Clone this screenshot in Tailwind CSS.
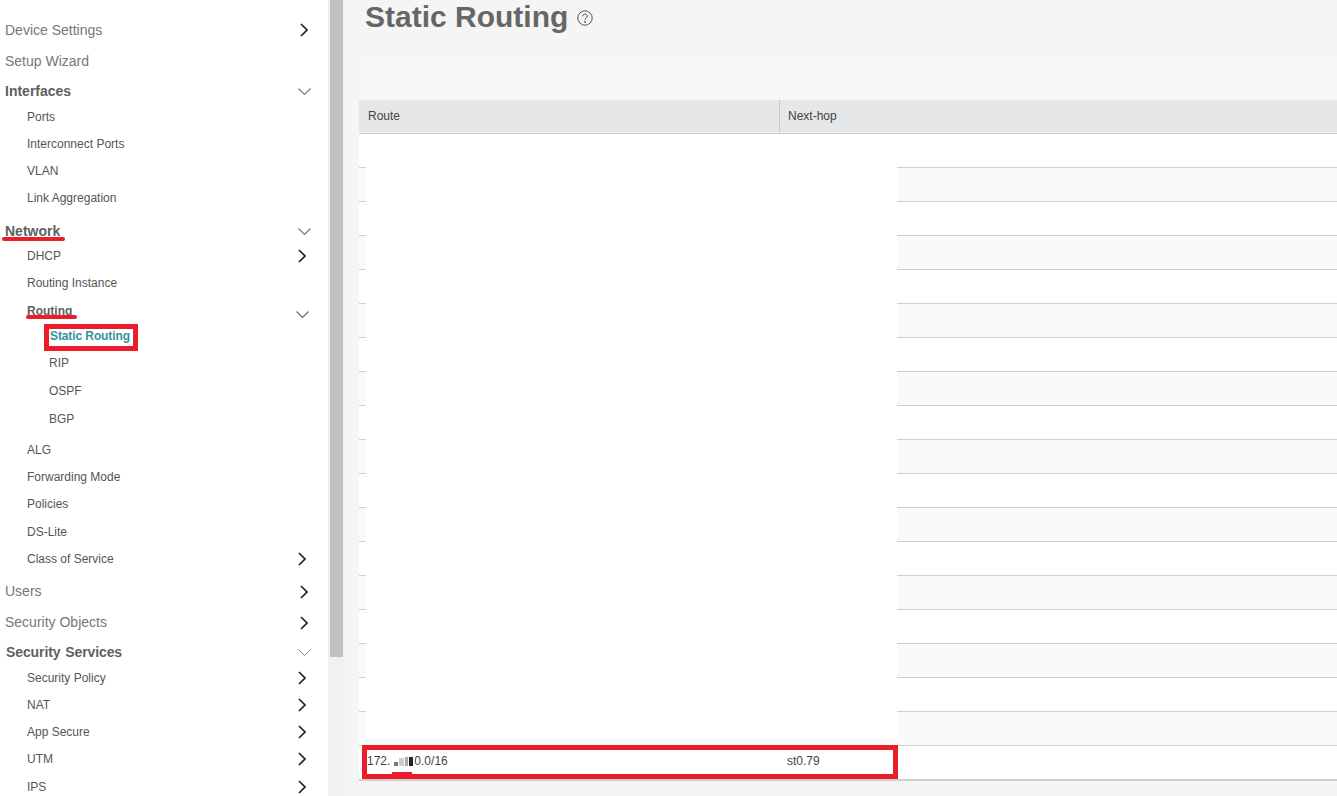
<!DOCTYPE html>
<html lang="en">
<head>
<meta charset="utf-8">
<title>Static Routing</title>
<script src="https://cdn.jsdelivr.net/npm/@tailwindcss/browser@4"></script>
</head>
<body class="overflow-hidden">
<div class="relative flex h-[796px] w-[1337px] overflow-hidden bg-[#f5f5f5] font-['Liberation_Sans',Arial,sans-serif]">

  <!-- Sidebar -->
  <nav class="h-[796px] w-[328px] shrink-0 overflow-hidden bg-white pt-[15px] text-[12px] text-[#555]">
    <div class="flex h-[30px] items-center justify-between pl-[5px] pr-[20px] text-[14px] text-[#777]">Device Settings
      <svg class="h-[14px] w-[8px] text-[#222]" viewBox="0 0 8 14" fill="none" stroke="currentColor" stroke-width="1.7"><path d="M1 1l6 6-6 6"/></svg></div>
    <div class="mt-[1px] flex h-[30px] items-center pl-[5px] text-[14px] text-[#777]">Setup Wizard</div>
    <div class="mt-[3px] flex h-[24px] items-center justify-between pl-[5px] pr-[17px] text-[14px] font-bold text-[#5f5f5f]">Interfaces
      <svg class="h-[7px] w-[13px] text-[#777]" viewBox="0 0 13 7" fill="none" stroke="currentColor" stroke-width="1.1"><path d="M.5.5l6 6 6-6"/></svg></div>
    <div class="flex h-[27px] items-center pl-[27px]">Ports</div>
    <div class="flex h-[27px] items-center pl-[27px]">Interconnect Ports</div>
    <div class="flex h-[27px] items-center pl-[27px]">VLAN</div>
    <div class="flex h-[27px] items-center pl-[27px]">Link Aggregation</div>
    <div class="mt-[8px] flex h-[24px] items-center justify-between pl-[5px] pr-[17px] text-[14px] font-bold text-[#5f5f5f]">Network
      <svg class="h-[7px] w-[13px] text-[#777]" viewBox="0 0 13 7" fill="none" stroke="currentColor" stroke-width="1.1"><path d="M.5.5l6 6 6-6"/></svg></div>
    <div class="flex h-[26px] items-center justify-between pl-[27px] pr-[22px]">DHCP
      <svg class="h-[14px] w-[8px] text-[#222]" viewBox="0 0 8 14" fill="none" stroke="currentColor" stroke-width="1.7"><path d="M1 1l6 6-6 6"/></svg></div>
    <div class="flex h-[27px] items-center pl-[27px]">Routing Instance</div>
    <div class="mt-[4px] flex h-[22px] items-center justify-between pl-[27px] pr-[19px] font-bold text-[#5f5f5f]">Routing
      <svg class="mt-[6px] h-[7px] w-[13px] text-[#666]" viewBox="0 0 13 7" fill="none" stroke="currentColor" stroke-width="1.1"><path d="M.5.5l6 6 6-6"/></svg></div>
    <div class="flex h-[27px] items-center pl-[50px] font-bold tracking-[-0.1px] text-[#2f9499]">Static Routing</div>
    <div class="flex h-[28px] items-center pl-[49px]">RIP</div>
    <div class="flex h-[28px] items-center pl-[49px]">OSPF</div>
    <div class="flex h-[27px] items-center pl-[49px]">BGP</div>
    <div class="mt-[4px] flex h-[27px] items-center pl-[27px]">ALG</div>
    <div class="flex h-[27px] items-center pl-[27px]">Forwarding Mode</div>
    <div class="flex h-[28px] items-center pl-[27px]">Policies</div>
    <div class="flex h-[27px] items-center pl-[27px]">DS-Lite</div>
    <div class="flex h-[27px] items-center justify-between pl-[27px] pr-[22px]">Class of Service
      <svg class="h-[14px] w-[8px] text-[#222]" viewBox="0 0 8 14" fill="none" stroke="currentColor" stroke-width="1.7"><path d="M1 1l6 6-6 6"/></svg></div>
    <div class="mt-[4px] flex h-[31px] items-center justify-between pl-[5px] pr-[20px] text-[14px] text-[#777]">Users
      <svg class="h-[14px] w-[8px] text-[#222]" viewBox="0 0 8 14" fill="none" stroke="currentColor" stroke-width="1.7"><path d="M1 1l6 6-6 6"/></svg></div>
    <div class="flex h-[31px] items-center justify-between pl-[5px] pr-[20px] text-[14px] text-[#777]">Security Objects
      <svg class="h-[14px] w-[8px] text-[#222]" viewBox="0 0 8 14" fill="none" stroke="currentColor" stroke-width="1.7"><path d="M1 1l6 6-6 6"/></svg></div>
    <div class="mt-[2px] flex h-[24px] items-center justify-between pl-[6px] pr-[17px] text-[14px] font-bold tracking-[-0.1px] text-[#5f5f5f] [word-spacing:1px]">Security Services
      <svg class="h-[7px] w-[13px] text-[#888]" viewBox="0 0 13 7" fill="none" stroke="currentColor" stroke-width="1"><path d="M.5.5l6 6 6-6"/></svg></div>
    <div class="flex h-[27px] items-center justify-between pl-[27px] pr-[22px]">Security Policy
      <svg class="h-[14px] w-[8px] text-[#222]" viewBox="0 0 8 14" fill="none" stroke="currentColor" stroke-width="1.7"><path d="M1 1l6 6-6 6"/></svg></div>
    <div class="flex h-[27px] items-center justify-between pl-[27px] pr-[22px]">NAT
      <svg class="h-[14px] w-[8px] text-[#222]" viewBox="0 0 8 14" fill="none" stroke="currentColor" stroke-width="1.7"><path d="M1 1l6 6-6 6"/></svg></div>
    <div class="flex h-[27px] items-center justify-between pl-[27px] pr-[22px]">App Secure
      <svg class="h-[14px] w-[8px] text-[#222]" viewBox="0 0 8 14" fill="none" stroke="currentColor" stroke-width="1.7"><path d="M1 1l6 6-6 6"/></svg></div>
    <div class="flex h-[28px] items-center justify-between pl-[27px] pr-[22px]">UTM
      <svg class="h-[14px] w-[8px] text-[#222]" viewBox="0 0 8 14" fill="none" stroke="currentColor" stroke-width="1.7"><path d="M1 1l6 6-6 6"/></svg></div>
    <div class="flex h-[27px] items-center justify-between pl-[27px] pr-[22px]">IPS
      <svg class="h-[14px] w-[8px] text-[#222]" viewBox="0 0 8 14" fill="none" stroke="currentColor" stroke-width="1.7"><path d="M1 1l6 6-6 6"/></svg></div>
  </nav>

  <!-- Scrollbar -->
  <div class="h-full w-[16px] shrink-0 bg-[#f1f1f1] pl-[1px] pr-[1px]">
    <div class="ml-[1px] h-[657px] w-[13px] bg-[#c1c1c1]"></div>
  </div>

  <!-- Main -->
  <main class="relative min-w-0 flex-1 bg-[#f5f5f5]">
    <div class="flex h-[60px] items-start gap-[9px] pl-[21px]">
      <h1 class="text-[30px] font-bold leading-[33px] text-[#666]">Static Routing</h1>
      <svg class="mt-[10px] h-[16px] w-[16px] text-[#555]" viewBox="0 0 16 16" fill="none" stroke="currentColor"><circle cx="8" cy="8" r="7.2"/><path d="M5.8 6.3a2.2 2.2 0 1 1 3.3 1.9c-.7.4-1.1.8-1.1 1.7" /><circle cx="8" cy="11.9" r=".5" fill="currentColor"/></svg>
    </div>
    <div class="ml-[15px] h-[40px] bg-[#f6f6f6]"></div>

    <div class="ml-[15px] text-[12px] text-[#444]">
      <div class="flex h-[33px] border-b border-[#f0f0f0] bg-[#e5e7e8]">
        <div class="flex w-[421px] items-center border-r border-[#c8c8c8] pl-[9px]">Route</div>
        <div class="flex items-center pl-[8px]">Next-hop</div>
      </div>
      <div class="h-[1px] bg-[#cfcfcf]"></div>
      <div class="h-[34px] border-b border-[#cfcfcf] bg-white"></div>
      <div class="h-[34px] border-b border-[#cfcfcf] bg-[#fafafa]"></div>
      <div class="h-[34px] border-b border-[#cfcfcf] bg-white"></div>
      <div class="h-[34px] border-b border-[#cfcfcf] bg-[#fafafa]"></div>
      <div class="h-[34px] border-b border-[#cfcfcf] bg-white"></div>
      <div class="h-[34px] border-b border-[#cfcfcf] bg-[#fafafa]"></div>
      <div class="h-[34px] border-b border-[#cfcfcf] bg-white"></div>
      <div class="h-[34px] border-b border-[#cfcfcf] bg-[#fafafa]"></div>
      <div class="h-[34px] border-b border-[#cfcfcf] bg-white"></div>
      <div class="h-[34px] border-b border-[#cfcfcf] bg-[#fafafa]"></div>
      <div class="h-[34px] border-b border-[#cfcfcf] bg-white"></div>
      <div class="h-[34px] border-b border-[#cfcfcf] bg-[#fafafa]"></div>
      <div class="h-[34px] border-b border-[#cfcfcf] bg-white"></div>
      <div class="h-[34px] border-b border-[#cfcfcf] bg-[#fafafa]"></div>
      <div class="h-[34px] border-b border-[#cfcfcf] bg-white"></div>
      <div class="h-[34px] border-b border-[#cfcfcf] bg-[#fafafa]"></div>
      <div class="h-[34px] border-b border-[#cfcfcf] bg-white"></div>
      <div class="h-[34px] border-b border-[#cfcfcf] bg-[#fafafa]"></div>
      <div class="flex h-[35px] items-center border-b-2 border-[#cfcfcf] bg-white pb-[3px]">
        <div class="flex w-[420px] items-center pl-[8px]">172.<span class="flex h-[10px] w-[24px] items-end gap-[1px] pl-[4px]"><span class="h-[4px] w-[4px] bg-[#777]"></span><span class="h-[8px] w-[5px] bg-[#ccc]"></span><span class="h-[9px] w-[3px] bg-[#aaa]"></span><span class="h-[9px] w-[4px] bg-[#222]"></span></span>0.0/16</div>
        <div class="pl-[8px]">st0.79</div>
      </div>
    </div>
  </main>

  <!-- Overlays: redaction and hand-drawn annotations -->
  <div class="absolute left-[366px] top-[134px] h-[604px] w-[531px] bg-white"></div>
  <div class="absolute left-[2px] top-[237px] h-[4px] w-[63px] rounded-full bg-[#ed1c2a]"></div>
  <div class="absolute left-[26px] top-[315px] h-[4px] w-[51px] rounded-full bg-[#ed1c2a]"></div>
  <div class="absolute left-[44px] top-[324px] h-[27px] w-[94px] border-[5px] border-[#ed1c2a]"></div>
  <div class="absolute left-[362px] top-[745px] h-[34px] w-[536px] border-[5px] border-[#ed1c2a]"></div>
  <div class="absolute left-[392px] top-[772px] h-[2px] w-[20px] bg-[#ed1c2a]"></div>
</div>
</body>
</html>
